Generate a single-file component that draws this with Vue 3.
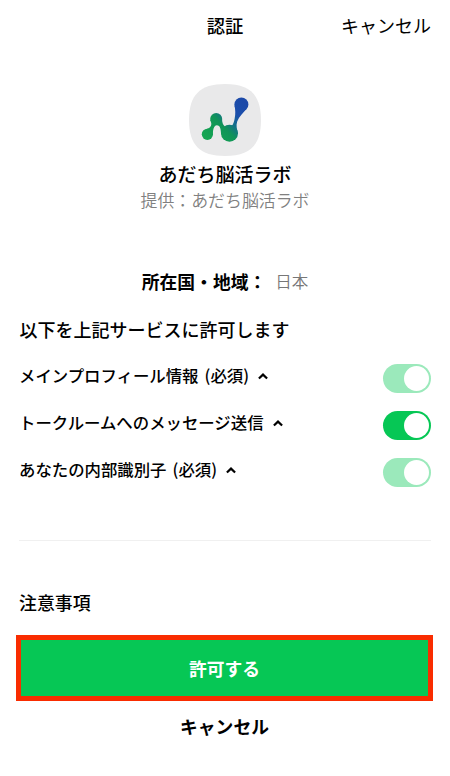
<script setup>
import { reactive } from 'vue'

const permissions = reactive([
  { label: 'メインプロフィール情報 (必須)', on: true, required: true },
  { label: 'トークルームへのメッセージ送信', on: true, required: false },
  { label: 'あなたの内部識別子 (必須)', on: true, required: true },
])

function toggle(item) {
  if (!item.required) item.on = !item.on
}
</script>

<template>
  <div class="screen">
    <header class="nav">
      <h1 class="nav-title">認証</h1>
      <span class="nav-cancel">キャンセル</span>
    </header>

    <section class="service">
      <svg class="logo" viewBox="0 0 72 72" aria-hidden="true">
        <defs>
          <linearGradient id="ink" gradientUnits="userSpaceOnUse" x1="18" y1="54" x2="56" y2="18">
            <stop offset="0" stop-color="#15a552" />
            <stop offset=".38" stop-color="#109458" />
            <stop offset=".55" stop-color="#14708a" />
            <stop offset=".72" stop-color="#1b4fac" />
            <stop offset="1" stop-color="#1c49a8" />
          </linearGradient>
        </defs>
        <path d="M36 0C61 0 72 11 72 36S61 72 36 72 0 61 0 36 11 0 36 0Z" fill="#e9e9ea" />
        <g fill="url(#ink)">
          <circle cx="18.4" cy="50.3" r="5.6" />
          <circle cx="27.2" cy="34.9" r="6" />
          <circle cx="40.5" cy="49.3" r="8.5" />
          <circle cx="52.4" cy="20.4" r="7" />
          <path d="M45.5 21.5C46.4 26 46.6 30 45.7 34.3C44.8 40 43 43.3 39.3 43.3C35 43.3 33.2 40 33.1 35.5L21.3 35.9C22.7 39 22.8 41.2 21 43.2C19.7 44.6 18 44.6 16.2 45.2L23.9 51C23.8 46.5 24.6 41.4 27.8 41.3C31.4 41.3 31.8 45.5 32.1 50.5L49 50C48 45.5 46.8 41.8 48.2 37.6C49.9 33 54.5 28.6 58 24.6Z" />
        </g>
      </svg>
      <h2 class="service-name">あだち脳活ラボ</h2>
      <p class="provider">提供：あだち脳活ラボ</p>
    </section>

    <p class="region">
      <strong class="region-label">所在国・地域：</strong><span class="region-value">日本</span>
    </p>

    <h3 class="section-title">以下を上記サービスに許可します</h3>
    <ul class="permissions">
      <li v-for="item in permissions" :key="item.label" class="permission">
        <span class="label">{{ item.label }}</span>
        <svg class="caret" viewBox="0 0 10 7" aria-hidden="true">
          <path d="M.9 5.5 5 1.6 9.1 5.5" fill="none" stroke="#000" stroke-width="2.2" />
        </svg>
        <span
          class="switch"
          :class="{ on: item.on, locked: item.required }"
          role="switch"
          :aria-checked="item.on"
          @click="toggle(item)"
        ><i class="thumb"></i></span>
      </li>
    </ul>

    <h3 class="notice">注意事項</h3>

    <footer class="actions">
      <button class="allow" type="button"><span>許可する</span></button>
      <button class="cancel" type="button">キャンセル</button>
    </footer>
  </div>
</template>

<style>
body {
  background: #fff;
}
</style>

<style scoped>
.screen {
  box-sizing: border-box;
  width: 450px;
  height: 776px;
  overflow: hidden;
  background: #fff;
  color: #000;
  font-family: "Noto Sans CJK JP", sans-serif;
  font-weight: 500;
}
h1, h2, h3, p, ul {
  margin: 0;
  padding: 0;
  font-weight: 500;
}
.nav {
  display: grid;
  grid-template-columns: 1fr auto 1fr;
  align-items: center;
  height: 50px;
  padding: 0 19px;
}
.nav-title {
  grid-column: 2;
  font-size: 18.3px;
  line-height: 28px;
}
.nav-cancel {
  justify-self: end;
  font-size: 18px;
  line-height: 28px;
  font-weight: 400;
}
.service {
  display: flex;
  flex-direction: column;
  align-items: center;
  padding-top: 34px;
}
.logo {
  width: 72px;
  height: 72px;
}
.service-name {
  margin-top: 4px;
  font-size: 19px;
  line-height: 28px;
}
.provider {
  margin-top: 1px;
  color: #808080;
  font-size: 16.9px;
  line-height: 22px;
  font-weight: 350;
}
.region {
  display: flex;
  justify-content: center;
  margin-top: 56px;
  height: 28px;
  line-height: 28px;
}
.region-label {
  font-size: 17.8px;
  font-weight: 700;
}
.region-value {
  margin-left: 9px;
  color: #777;
  font-size: 16.5px;
  font-weight: 350;
}
.section-title {
  margin: 20px 0 0 19.5px;
  font-size: 18px;
  line-height: 28px;
}
.permissions {
  margin: 12px 19px 0;
  padding-bottom: 44px;
  border-bottom: 1px solid #f0f0f0;
  list-style: none;
}
.permission {
  display: flex;
  align-items: center;
  height: 46.9px;
}
.label {
  padding: 0 0 6px;
  font-size: 16.4px;
  line-height: 24px;
  word-spacing: 2.4px;
}
.caret {
  width: 10px;
  height: 7px;
  margin: 0 0 4px 9px;
}
.switch {
  box-sizing: border-box;
  display: flex;
  width: 48px;
  height: 29px;
  margin-left: auto;
  padding: 2px;
  border-radius: 15px;
  background: #d4d4d4;
}
.switch.on {
  justify-content: flex-end;
  background: #06c755;
}
.switch.locked {
  background: #9be9bb;
}
.thumb {
  width: 25px;
  height: 25px;
  border-radius: 50%;
  background: #fff;
}
.notice {
  margin: 47.3px 0 0 19px;
  font-size: 17.9px;
  line-height: 28px;
}
.actions {
  display: flex;
  flex-direction: column;
  margin: 19px 17px 0 16px;
}
button {
  padding: 0;
  border: 0;
  background: none;
  color: #000;
  font-family: inherit;
  font-size: 17.8px;
  font-weight: 700;
  line-height: 28px;
}
.allow {
  height: 66px;
  border: 5px solid #f92c00;
  background: #06c755;
  color: #fff;
}
.cancel {
  margin-top: 11px;
}
</style>
